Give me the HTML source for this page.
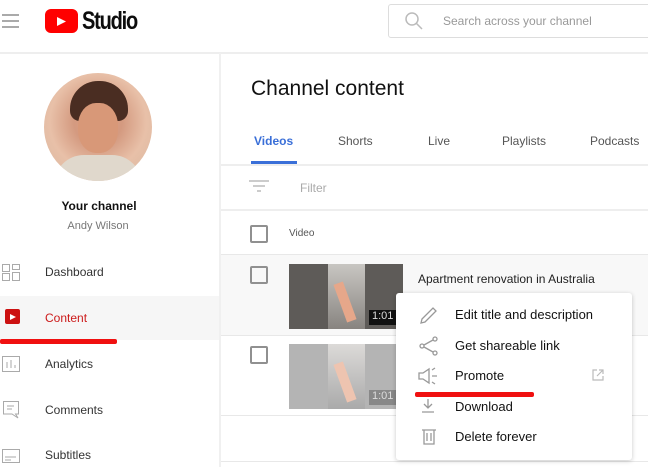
<!DOCTYPE html>
<html><head><meta charset="utf-8"><style>
*{margin:0;padding:0;box-sizing:border-box}
body{width:648px;height:467px;overflow:hidden;background:#fff;font-family:"Liberation Sans",sans-serif;position:relative;color:#0d0d0d}
.a{position:absolute;white-space:nowrap}
.hl{position:absolute;height:1px;background:#e8e8e8}
.cb{position:absolute;width:18px;height:18px;border:2px solid #909090;border-radius:2px}
.nav{position:absolute;left:45px;font-size:12px;color:#333}
.mi{position:absolute;left:455px;font-size:13px;color:#111}
</style></head><body>
<div class="a" style="left:2px;top:14px;width:17px;height:2px;background:#aaa;box-shadow:0 6px 0 #aaa,0 12px 0 #aaa"></div>
<div class="a" style="left:45px;top:9px;width:33px;height:24px;background:#f00;border-radius:6px"></div>
<svg class="a" style="left:56px;top:16px" width="12" height="11"><path d="M1 1 L10 5.5 L1 10Z" fill="#fff"/></svg>
<div class="a" style="left:82px;top:7px;font-size:25px;font-weight:bold;letter-spacing:-1.5px;transform:scaleX(.8);transform-origin:left">Studio</div>
<div class="a" style="left:388px;top:4px;width:270px;height:34px;border:1px solid #ddd;border-radius:3px"></div>
<svg class="a" style="left:404px;top:11px" width="20" height="20"><circle cx="8" cy="8" r="6" fill="none" stroke="#bbb" stroke-width="1.5"/><path d="M12.5 12.5 L18 18" stroke="#bbb" stroke-width="1.5"/></svg>
<div class="a" style="left:443px;top:14px;font-size:12px;color:#999">Search across your channel</div>
<div class="hl" style="left:0;top:52px;width:648px;height:2px;background:#eee"></div>
<div class="a" style="left:219px;top:53px;width:2px;height:414px;background:#f0f0f0"></div>
<div class="a" style="left:44px;top:73px;width:108px;height:108px;border-radius:50%;overflow:hidden;background:radial-gradient(circle at 50% 45%,#e0a080 0,#d49a80 30%,#e8c0a8 60%,#d8b8a0 100%)">
<div class="a" style="left:26px;top:8px;width:58px;height:40px;border-radius:28px 28px 10px 10px;background:#4a2d22"></div>
<div class="a" style="left:34px;top:30px;width:40px;height:50px;border-radius:45%;background:#d89878"></div>
<div class="a" style="left:10px;top:82px;width:88px;height:30px;background:#e0d8cc;border-radius:30px 30px 0 0"></div>
</div>
<div class="a" style="left:0;top:206px;width:198px;text-align:center;font-size:12px;font-weight:bold;color:#111;line-height:1;margin-top:-6px">Your channel</div>
<div class="a" style="left:0;top:227px;width:196px;text-align:center;font-size:11px;color:#777;line-height:1;margin-top:-6px">Andy Wilson</div>
<svg class="a" style="left:2px;top:264px" width="18" height="17" fill="none" stroke="#aaa"><rect x=".5" y=".5" width="7" height="7"/><rect x="10.5" y=".5" width="7" height="5"/><rect x=".5" y="9.5" width="7" height="7"/><rect x="10.5" y="8.5" width="7" height="8"/></svg>
<div class="nav" style="top:265px">Dashboard</div>
<div class="a" style="left:0;top:296px;width:219px;height:44px;background:#f6f6f6"></div>
<div class="a" style="left:5px;top:309px;width:15px;height:15px;background:#cc1111;border-radius:2px"></div>
<svg class="a" style="left:10px;top:314px" width="6" height="6"><path d="M0 0L6 3L0 6Z" fill="#fff"/></svg>
<div class="nav" style="top:311px;color:#cc1a1a">Content</div>
<div class="a" style="left:0;top:339px;width:117px;height:5px;background:#f01010;border-radius:2px"></div>
<svg class="a" style="left:2px;top:356px" width="18" height="16" fill="none" stroke="#aaa"><rect x=".5" y=".5" width="17" height="15"/><path d="M5 12V6M9 12V4M13 12V9"/></svg>
<div class="nav" style="top:357px">Analytics</div>
<svg class="a" style="left:3px;top:401px" width="16" height="18" fill="none" stroke="#aaa"><path d="M.5 .5H15.5V13H12.5L15 17L9 13H.5Z"/><path d="M4 5H11M4 8H9"/></svg>
<div class="nav" style="top:403px">Comments</div>
<svg class="a" style="left:2px;top:449px" width="18" height="14" fill="none" stroke="#aaa"><rect x=".5" y=".5" width="17" height="13"/><path d="M3 8H14M3 11H9"/></svg>
<div class="nav" style="top:448px">Subtitles</div>
<div class="a" style="left:251px;top:77px;font-size:21px;font-weight:500;color:#111">Channel content</div>
<div class="a" style="left:254px;top:134px;font-size:12px;color:#3a6fd8;font-weight:bold">Videos</div>
<div class="a" style="left:338px;top:134px;font-size:12px;color:#555">Shorts</div>
<div class="a" style="left:428px;top:134px;font-size:12px;color:#555">Live</div>
<div class="a" style="left:502px;top:134px;font-size:12px;color:#555">Playlists</div>
<div class="a" style="left:590px;top:134px;font-size:12px;color:#555">Podcasts</div>
<div class="a" style="left:251px;top:161px;width:46px;height:3px;background:#3a6fd8"></div>
<div class="hl" style="left:221px;top:164px;width:427px;height:2px;background:#eee"></div>
<svg class="a" style="left:249px;top:180px" width="20" height="14" stroke="#bbb" stroke-width="1.5"><path d="M0 1H20M4 6H16M8 11H12"/></svg>
<div class="a" style="left:300px;top:181px;font-size:12px;color:#aaa">Filter</div>
<div class="hl" style="left:221px;top:209px;width:427px;height:2px;background:#eee"></div>
<div class="cb" style="left:250px;top:225px"></div>
<div class="a" style="left:289px;top:228px;font-size:10px;color:#555">Video</div>
<div class="hl" style="left:221px;top:254px;width:427px"></div>
<div class="a" style="left:221px;top:255px;width:427px;height:80px;background:#f8f8f8"></div>
<div class="cb" style="left:250px;top:266px"></div>
<div class="a" style="left:289px;top:264px;width:114px;height:65px;background:#5e5b58"></div>
<div class="a" style="left:328px;top:264px;width:37px;height:65px;background:linear-gradient(#c8c6c2,#888480)"></div>
<div class="a" style="left:340px;top:282px;width:10px;height:40px;background:#e6a78a;transform:rotate(-20deg)"></div>
<div class="a" style="left:369px;top:310px;width:34px;height:15px;background:#111;color:#ddd;font-size:11px;padding-left:3px">1:01</div>
<div class="a" style="left:418px;top:272px;font-size:12px;color:#222">Apartment renovation in Australia</div>
<div class="hl" style="left:221px;top:335px;width:427px"></div>
<div class="cb" style="left:250px;top:346px"></div>
<div class="a" style="left:289px;top:344px;width:114px;height:65px;background:#b4b4b4"></div>
<div class="a" style="left:328px;top:344px;width:37px;height:65px;background:linear-gradient(#dcdad8,#aaa)"></div>
<div class="a" style="left:340px;top:362px;width:10px;height:40px;background:#eec4b0;transform:rotate(-20deg)"></div>
<div class="a" style="left:369px;top:390px;width:34px;height:15px;background:#888;color:#ddd;font-size:11px;padding-left:3px">1:01</div>
<div class="hl" style="left:221px;top:415px;width:427px"></div>
<div class="hl" style="left:221px;top:461px;width:427px"></div>
<div class="a" style="left:396px;top:293px;width:236px;height:167px;background:#fff;border-radius:3px;box-shadow:0 1px 5px rgba(0,0,0,.22)"></div>
<svg class="a" style="left:418px;top:305px" width="20" height="20" fill="none" stroke="#999" stroke-width="1.3"><path d="M3 18L4 14L15 3L18 6L7 17Z"/></svg>
<div class="mi" style="top:307px">Edit title and description</div>
<svg class="a" style="left:419px;top:336px" width="20" height="20" fill="none" stroke="#999" stroke-width="1.3"><circle cx="3" cy="10" r="2"/><circle cx="16" cy="3" r="2"/><circle cx="16" cy="17" r="2"/><path d="M5 9L14 4M5 11L14 16"/></svg>
<div class="mi" style="top:338px">Get shareable link</div>
<svg class="a" style="left:418px;top:367px" width="20" height="18" fill="none" stroke="#999" stroke-width="1.3"><path d="M1 6H5L11 2V16L5 12H1Z"/><path d="M14 3L17 1M14 9H19M14 15L17 17"/></svg>
<div class="mi" style="top:368px">Promote</div>
<svg class="a" style="left:592px;top:369px" width="12" height="12" fill="none" stroke="#bbb" stroke-width="1.2"><path d="M5 1H1V11H11V7M7 1H11V5M11 1L5 7"/></svg>
<div class="a" style="left:415px;top:392px;width:119px;height:5px;background:#f01010;border-radius:2px"></div>
<svg class="a" style="left:421px;top:398px" width="14" height="16" fill="none" stroke="#999" stroke-width="1.3"><path d="M7 1V10M3 6L7 10L11 6M1 14H13"/></svg>
<div class="mi" style="top:399px">Download</div>
<svg class="a" style="left:421px;top:427px" width="16" height="18" fill="none" stroke="#999" stroke-width="1.3"><path d="M1 3H15M3 3V17H13V3M6 6V14M10 6V14"/></svg>
<div class="mi" style="top:429px">Delete forever</div>
</body></html>
